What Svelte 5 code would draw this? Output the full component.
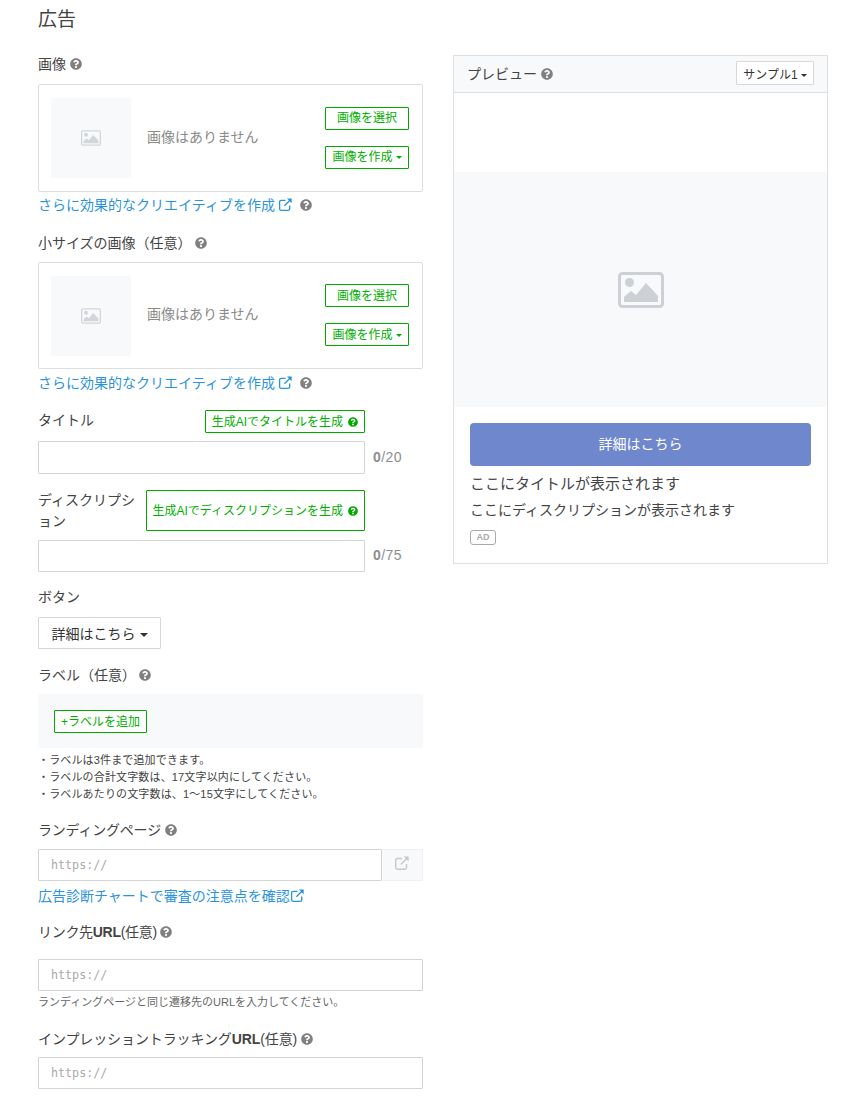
<script>
    const helpPath = "M504 256c0 136.997-111.043 248-248 248S8 392.997 8 256C8 119.083 119.043 8 256 8s248 111.083 248 248zM262.655 90c-54.497 0-89.255 22.957-116.549 63.758-3.536 5.286-2.353 12.415 2.715 16.258l34.699 26.31c5.205 3.947 12.621 3.008 16.665-2.122 17.864-22.658 30.113-35.797 57.303-35.797 20.429 0 45.698 13.148 45.698 32.958 0 14.976-12.363 22.667-32.534 33.976C247.128 238.528 216 254.941 216 296v4c0 6.627 5.373 12 12 12h56c6.627 0 12-5.373 12-12v-1.333c0-28.462 83.186-29.647 83.186-106.667 0-58.002-60.165-102-116.531-102zM256 338c-25.365 0-46 20.635-46 46 0 25.364 20.635 46 46 46s46-20.636 46-46c0-25.365-20.635-46-46-46z";
    const notes = [
        "・ラベルは3件まで追加できます。",
        "・ラベルの合計文字数は、17文字以内にしてください。",
        "・ラベルあたりの文字数は、1〜15文字にしてください。"
    ];
</script>

{#snippet help(cls = "")}
    <svg class="help {cls}" viewBox="0 0 512 512" aria-hidden="true"><path d={helpPath} fill="currentColor" /></svg>
{/snippet}

{#snippet ext(cls = "")}
    <svg class="ext {cls}" viewBox="0 0 16 16" aria-hidden="true" fill="none" stroke="currentColor" stroke-width="1.4">
        <path d="M12.5 9v3.6a1.7 1.7 0 0 1-1.7 1.7H3.4a1.7 1.7 0 0 1-1.7-1.7V5.2a1.7 1.7 0 0 1 1.7-1.7H8" />
        <path d="M6.8 9.4 13.6 2.6" />
        <path d="M9.6 1.6h5v5z" fill="currentColor" stroke="none" />
    </svg>
{/snippet}

{#snippet picture(cls = "")}
    <svg class={cls} viewBox="0 0 46 36" aria-hidden="true">
        <rect x="1.5" y="1.5" width="43" height="33" rx="3" fill="none" stroke="currentColor" stroke-width="3" />
        <circle cx="11.5" cy="10.5" r="4.5" fill="currentColor" />
        <path d="M6 30v-5l7-6 5 4 10-12 12 13v6z" fill="currentColor" />
    </svg>
{/snippet}

{#snippet imageBox(cls = "")}
    <div class="image-box {cls}">
        <div class="thumb">{@render picture("thumb-icon")}</div>
        <span class="no-image">画像はありません</span>
        <div class="image-actions">
            <button class="btn-line wide">画像を選択</button>
            <button class="btn-line wide">画像を作成<i class="caret"></i></button>
        </div>
    </div>
    <div class="link-row">
        <a href="#top" class="link">さらに効果的なクリエイティブを作成{@render ext("ext-gap")}</a>
        {@render help("help-link")}
    </div>
{/snippet}

<main class="page">
    <section class="form">
        <h2>広告</h2>

        <div class="label first">画像 {@render help()}</div>
        {@render imageBox()}

        <div class="label small-image">小サイズの画像（任意）{@render help("help-wide")}</div>
        {@render imageBox("second")}

        <div class="gen-row title-row">
            <div class="label-text">タイトル</div>
            <button class="btn-line gen">生成AIでタイトルを生成{@render help("help-green")}</button>
        </div>
        <div class="count-row">
            <input class="text-input" type="text" />
            <span class="count"><b>0</b>/20</span>
        </div>

        <div class="gen-row desc-row">
            <div class="label-text desc-label">ディスクリプション</div>
            <button class="btn-line gen tall">生成AIでディスクリプションを生成{@render help("help-green")}</button>
        </div>
        <div class="count-row desc-count">
            <input class="text-input" type="text" />
            <span class="count"><b>0</b>/75</span>
        </div>

        <div class="label button-label">ボタン</div>
        <button class="dropdown">詳細はこちら<i class="caret dark big"></i></button>

        <div class="label label-label">ラベル（任意）{@render help("help-wide")}</div>
        <div class="label-area">
            <button class="btn-line add">+ラベルを追加</button>
        </div>
        <ul class="notes">
            {#each notes as note}
                <li>{note}</li>
            {/each}
        </ul>

        <div class="label landing-label">ランディングページ {@render help()}</div>
        <div class="input-group">
            <input class="text-input mono" type="text" placeholder="https://" />
            <span class="addon">{@render ext("ext-addon")}</span>
        </div>
        <a href="#top" class="link diag">広告診断チャートで審査の注意点を確認{@render ext()}</a>

        <div class="label link-label">リンク先<b>URL</b>(任意) {@render help()}</div>
        <input class="text-input mono full" type="text" placeholder="https://" />
        <p class="hint">ランディングページと同じ遷移先のURLを入力してください。</p>

        <div class="label imp-label">インプレッショントラッキング<b>URL</b>(任意) {@render help()}</div>
        <input class="text-input mono full" type="text" placeholder="https://" />
    </section>

    <aside class="preview">
        <header>
            <span>プレビュー {@render help()}</span>
            <button class="sample">サンプル1<i class="caret dark"></i></button>
        </header>
        <div class="preview-image">{@render picture("preview-icon")}</div>
        <div class="preview-body">
            <div class="cta">詳細はこちら</div>
            <div class="p-title">ここにタイトルが表示されます</div>
            <div class="p-desc">ここにディスクリプションが表示されます</div>
            <span class="ad">AD</span>
        </div>
    </aside>
</main>

<style>
    :global(body) {
        background: #fff;
        color: #444;
        font-family: "Liberation Sans", "Noto Sans CJK JP", sans-serif;
        font-size: 14px;
    }
    .page {
        display: flex;
        align-items: flex-start;
        gap: 30px;
        padding: 0 40px 0 38px;
        height: 1101px;
        box-sizing: border-box;
        overflow: hidden;
    }
    .form {
        width: 385px;
        flex: none;
    }
    h2 {
        margin: 0;
        padding-top: 8px;
        font-size: 19px;
        font-weight: 400;
        line-height: 24px;
    }
    .label, .label-text {
        line-height: 20px;
        display: block;
    }
    .label b {
        font-weight: 700;
    }
    .first { margin-top: 22px; }
    .help {
        width: 12px;
        height: 12px;
        color: #808080;
        vertical-align: -1px;
    }
    .help-wide { margin-left: 3px; }
    .help-link { margin-left: 3px; vertical-align: -1px; }
    .help-green { color: #00a800; margin-left: 5px; width: 10px; height: 10px; }
    .ext {
        width: 15px;
        height: 15px;
        vertical-align: -2px;
    }
    .ext-gap { margin-left: 3px; }
    .ext-addon { color: #c8c8c8; width: 16px; height: 16px; }

    .image-box {
        margin-top: 10px;
        height: 108px;
        box-sizing: border-box;
        border: 1px solid #ddd;
        border-radius: 2px;
        padding: 0 13px 0 12px;
        display: flex;
        align-items: center;
    }
    .image-box.second {
        margin-top: 9px;
        height: 107px;
    }
    .image-box.second + .link-row { margin-top: 4px; }
    .thumb {
        width: 80px;
        height: 80px;
        background: #f8f9fb;
        display: flex;
        align-items: center;
        justify-content: center;
        color: #d2d5da;
    }
    :global(.thumb-icon) {
        width: 20px;
        height: 16px;
    }
    .no-image {
        margin: 0 0 5px 16px;
        color: #8a8a8a;
        flex: 1;
    }
    .image-actions {
        display: flex;
        flex-direction: column;
        gap: 16px;
        margin-bottom: 1px;
    }
    .btn-line {
        font: inherit;
        font-size: 12px;
        line-height: 1;
        background: #fff;
        color: #00b000;
        border: 1px solid #00a800;
        border-radius: 1px;
        padding: 0;
        height: 23px;
    }
    .wide { width: 84px; }
    .caret {
        display: inline-block;
        margin-left: 3px;
        border-top: 3px solid currentColor;
        border-left: 3px solid transparent;
        border-right: 3px solid transparent;
        vertical-align: 2px;
    }
    .caret.dark { color: #333; }
    .caret.big {
        margin-left: 4px;
        border-top-width: 4px;
        border-left-width: 4px;
        border-right-width: 4px;
    }
    .link {
        color: #2b93de;
        text-decoration: none;
    }
    .link-row {
        line-height: 20px;
        margin-top: 3px;
    }
    .small-image { margin-top: 18px; }

    .gen-row {
        display: flex;
        justify-content: space-between;
        width: 327px;
    }
    .title-row {
        margin-top: 17px;
        height: 23px;
    }
    .gen {
        padding: 0 6px;
    }
    .tall { height: 41px; }
    .desc-row {
        margin-top: 16px;
        height: 41px;
    }
    .desc-label {
        width: 100px;
        line-height: 21px;
    }
    .count-row {
        display: flex;
        align-items: center;
        margin-top: 8px;
    }
    .desc-count { margin-top: 9px; }
    .desc-count .text-input { height: 32px; }
    .text-input {
        width: 327px;
        height: 33px;
        box-sizing: border-box;
        border: 1px solid #d4d4d4;
        border-radius: 1px;
        padding: 0 12px;
        background: #fff;
        font: inherit;
        outline: none;
    }
    .count {
        margin: 0 0 2px 8px;
        color: #8e8e8e;
        letter-spacing: 0.4px;
    }
    .count b { font-weight: 700; }
    .button-label { margin-top: 15px; }
    .dropdown {
        display: block;
        margin-top: 10px;
        width: 123px;
        height: 32px;
        font: inherit;
        color: #333;
        background: #fff;
        border: 1px solid #d8d8d8;
        border-radius: 1px;
        padding: 0;
    }
    .label-label { margin-top: 16px; }
    .label-area {
        margin-top: 9px;
        height: 54px;
        background: #f8f9fb;
        padding: 16px;
        box-sizing: border-box;
    }
    .add {
        width: 93px;
        display: block;
    }
    .notes {
        list-style: none;
        margin: 4px 0 0;
        padding: 0;
        font-size: 11px;
        line-height: 17px;
        letter-spacing: 0.15px;
    }
    .landing-label {
        margin-top: 17px;
        letter-spacing: -0.2px;
    }
    .input-group {
        display: flex;
        margin-top: 9px;
    }
    .input-group .text-input {
        width: 344px;
        height: 32px;
    }
    .mono {
        font-family: "DejaVu Sans Mono", monospace;
        font-size: 11.7px;
    }
    .mono::placeholder { color: #aaa; opacity: 1; }
    .addon {
        flex: 1;
        background: #f8f9fb;
        display: flex;
        align-items: center;
        justify-content: center;
        padding-bottom: 4px;
        border: 1px solid #f0f1f2;
        border-left: none;
    }
    .diag {
        display: block;
        line-height: 20px;
        margin-top: 5px;
    }
    .link-label {
        margin-top: 16px;
        letter-spacing: -0.3px;
    }
    .full {
        display: block;
        width: 385px;
        height: 32px;
        margin-top: 17px;
    }
    .hint {
        margin: 4px 0 0;
        font-size: 11px;
        line-height: 15px;
        color: #666;
    }
    .imp-label {
        margin-top: 19px;
        letter-spacing: -0.1px;
    }
    .imp-label + .full { margin-top: 8px; }

    .preview {
        width: 375px;
        height: 509px;
        margin-top: 55px;
        box-sizing: border-box;
        border: 1px solid #e0e0e0;
        flex: none;
    }
    .preview header {
        height: 37px;
        box-sizing: border-box;
        background: #f8f9fb;
        border-bottom: 1px solid #ddd;
        display: flex;
        align-items: center;
        justify-content: space-between;
        padding: 0 13px 2px;
    }
    .sample {
        width: 78px;
        height: 24px;
        padding: 0;
        font: inherit;
        font-size: 12px;
        color: #333;
        background: #fff;
        border: 1px solid #d8d8d8;
        border-radius: 1px;
    }
    .preview-image {
        margin-top: 79px;
        height: 235px;
        background: #f8f9fb;
        display: flex;
        align-items: center;
        justify-content: center;
        color: #cdd0d5;
    }
    :global(.preview-icon) {
        width: 46px;
        height: 36px;
    }
    .preview-body {
        padding: 16px 16px 0;
    }
    .cta {
        height: 43px;
        line-height: 43px;
        text-align: center;
        color: #fff;
        background: #6f87cc;
        border-radius: 4px;
    }
    .p-title {
        margin-top: 8px;
        font-size: 15px;
        line-height: 20px;
    }
    .p-desc {
        margin-top: 6px;
        line-height: 20px;
    }
    .ad {
        display: inline-block;
        margin-top: 10px;
        width: 26px;
        height: 15px;
        box-sizing: border-box;
        border: 1px solid #aaa;
        border-radius: 3px;
        font-size: 9px;
        font-weight: 700;
        line-height: 13px;
        text-align: center;
        color: #aaa;
    }
</style>
